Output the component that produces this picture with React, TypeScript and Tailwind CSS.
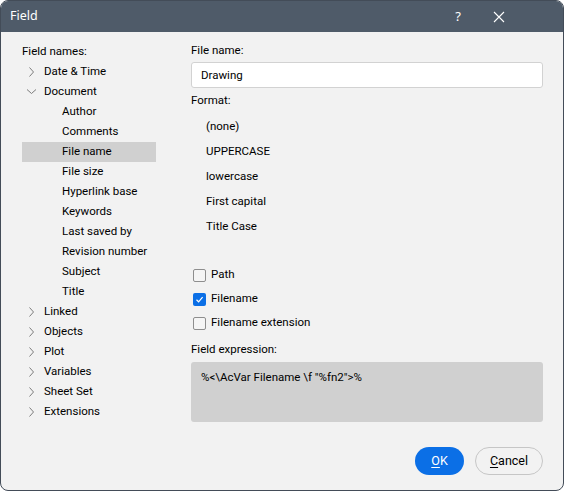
import React from "react";

const docChildren = [
  "Author",
  "Comments",
  "File name",
  "File size",
  "Hyperlink base",
  "Keywords",
  "Last saved by",
  "Revision number",
  "Subject",
  "Title",
];

const afterDoc = ["Linked", "Objects", "Plot", "Variables", "Sheet Set", "Extensions"];

const formats = ["(none)", "UPPERCASE", "lowercase", "First capital", "Title Case"];

function ChevronRight() {
  return (
    <svg width="22" height="20" viewBox="0 0 22 20" className="shrink-0">
      <path d="M7.5 5.5 L11.5 10 L7.5 14.5" fill="none" stroke="#7d7d7d" strokeWidth="1" />
    </svg>
  );
}

function ChevronDown() {
  return (
    <svg width="22" height="20" viewBox="0 0 22 20" className="shrink-0">
      <path d="M5 7.5 L9.5 11.5 L14 7.5" fill="none" stroke="#7d7d7d" strokeWidth="1" />
    </svg>
  );
}

function Checkbox({ label, checked }: { label: string; checked?: boolean }) {
  return (
    <div className="flex h-[24px] items-center gap-[5px] pl-[2px]">
      {checked ? (
        <div className="flex h-[13px] w-[13px] items-center justify-center rounded-[2px] bg-[#0b6fe6]">
          <svg width="9" height="9" viewBox="0 0 9 9">
            <path d="M1.5 4.8 L3.6 6.8 L7.6 2.2" fill="none" stroke="#ffffff" strokeWidth="1.2" />
          </svg>
        </div>
      ) : (
        <div className="h-[13px] w-[13px] rounded-[2px] border border-[#8e8e8e] bg-[#f5f5f5]" />
      )}
      <span>{label}</span>
    </div>
  );
}

export default function App() {
  return (
    <div className="h-[492px] w-[565px] bg-white">
      <div className="flex h-[491px] w-[564px] flex-col overflow-hidden rounded-[8px] border border-[#434c58] bg-[#f2f2f2] font-['Roboto',sans-serif] text-[11.5px] text-black">
        {/* Title bar */}
        <div className="flex h-[31px] shrink-0 items-center bg-[#4f5b69] pr-[43px] text-white">
          <span className="flex-1 pl-[9px] font-['Noto_Sans',sans-serif] text-[12.5px]">Field</span>
          <span className="w-[40px] text-center font-['Noto_Sans',sans-serif] text-[13px]">?</span>
          <div className="flex w-[42px] items-center justify-center">
            <svg width="12" height="12" viewBox="0 0 12 12">
              <path d="M1 1 L11 11 M11 1 L1 11" stroke="#ffffff" strokeWidth="1.1" />
            </svg>
          </div>
        </div>

        <div className="flex flex-1">
          {/* Left tree */}
          <div className="w-[190px] shrink-0 pl-[21px] pt-[10px]">
            <div className="flex h-[20px] items-center">Field names:</div>
            <div className="flex h-[20px] items-center">
              <ChevronRight />
              <span>Date &amp; Time</span>
            </div>
            <div className="flex h-[20px] items-center">
              <ChevronDown />
              <span>Document</span>
            </div>
            {docChildren.map((c) => (
              <div
                key={c}
                className={`flex h-[20px] w-[134px] items-center pl-[40px] ${
                  c === "File name" ? "bg-[#d0d0d0]" : ""
                }`}
              >
                {c}
              </div>
            ))}
            {afterDoc.map((c) => (
              <div key={c} className="flex h-[20px] items-center">
                <ChevronRight />
                <span>{c}</span>
              </div>
            ))}
          </div>

          {/* Right panel */}
          <div className="flex w-[352px] flex-col pt-[10px]">
            <div className="flex h-[18px] items-center">File name:</div>
            <div className="mt-[2px] flex h-[26px] items-center rounded-[3px] border border-[#d2d2d2] bg-white pl-[9px] pt-[1px]">
              Drawing
            </div>
            <div className="mt-[4px] flex h-[18px] items-center">Format:</div>
            <div className="mt-[4px] flex flex-col">
              {formats.map((f) => (
                <div key={f} className="flex h-[25px] items-center pl-[15px]">
                  {f}
                </div>
              ))}
            </div>
            <div className="mt-[24px] flex flex-col">
              <Checkbox label="Path" />
              <Checkbox label="Filename" checked />
              <Checkbox label="Filename extension" />
            </div>
            <div className="mt-[6px] flex h-[18px] items-center">Field expression:</div>
            <div className="mt-[3px] h-[60px] rounded-[3px] bg-[#d0d0d0] pl-[10px] pt-[6px] leading-[18px]">
              {'%<\\AcVar Filename \\f "%fn2">%'}
            </div>
            <div className="mt-[25px] flex justify-end gap-[11px] text-[12.5px]">
              <button className="flex h-[28px] w-[49px] items-center justify-center rounded-full bg-[#0b6fe6] text-white">
                <span>
                  <span className="underline underline-offset-2">O</span>K
                </span>
              </button>
              <button className="flex h-[28px] w-[68px] items-center justify-center rounded-full border border-[#c6c6c6] bg-[#f2f2f2] text-black">
                <span>
                  <span className="underline underline-offset-2">C</span>ancel
                </span>
              </button>
            </div>
          </div>
        </div>
      </div>
    </div>
  );
}
